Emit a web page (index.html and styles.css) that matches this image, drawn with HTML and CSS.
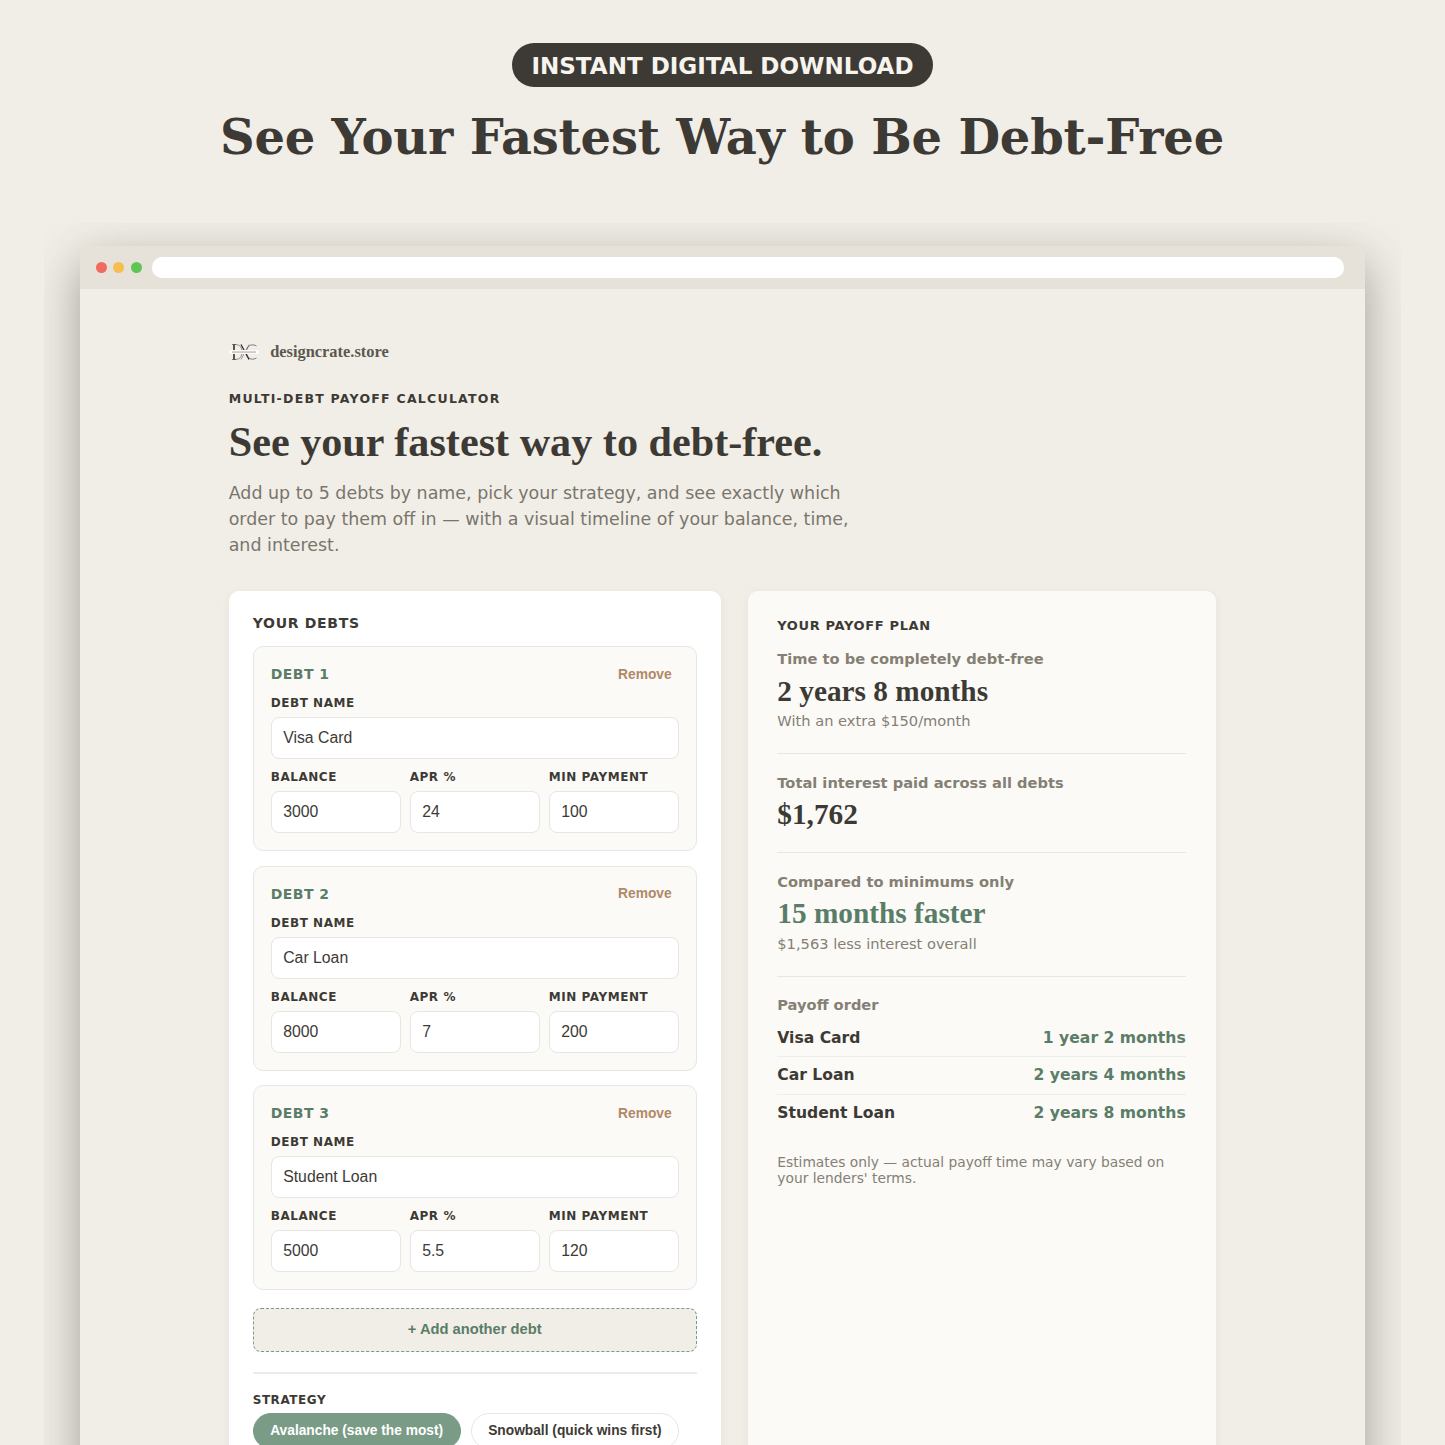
FILE: index.html
```html
<!DOCTYPE html>
<html lang="en">
<head>
<meta charset="utf-8">
<title>Multi-Debt Payoff Calculator</title>
<link rel="stylesheet" href="styles.css">
</head>
<body>
<header class="hero">
  <div class="badge">INSTANT DIGITAL DOWNLOAD</div>
  <h1 class="hero-title">See Your Fastest Way to Be Debt-Free</h1>
</header>
<div class="stage">
<div class="window">
  <div class="chrome">
    <span class="dot red"></span><span class="dot yellow"></span><span class="dot green"></span>
    <div class="url"></div>
  </div>
  <main class="page">
    <div class="brand">
      <svg class="logo" width="30" height="18" viewBox="0 0 30 18">
        <path d="M5 1.5v15" fill="none" stroke="#222" stroke-width="1.5"/>
        <path d="M3 1.5h4M3 16.5h4" fill="none" stroke="#333" stroke-width="0.6"/>
        <path d="M6 1.5c5 0 7 3 7 7.500s-2 7.500-7 7.500" fill="none" stroke="#333" stroke-width="0.5"/>
        <path d="M12 1.500l8 15" fill="none" stroke="#222" stroke-width="1.200"/>
        <path d="M20 1.500l-8 15" fill="none" stroke="#444" stroke-width="0.5"/>
        <path d="M27.500 3c-5-3-10 0-10 6s5 9 10 6" fill="none" stroke="#333" stroke-width="0.6"/>
        <rect x="0" y="7" width="30" height="4" fill="#fbfaf7"/>
        <rect x="3" y="8.600" width="24" height="0.9" fill="#9a9a9a"/>
      </svg>
      <span class="brand-name">designcrate.store</span>
    </div>
    <div class="eyebrow">MULTI-DEBT PAYOFF CALCULATOR</div>
    <h2 class="title">See your fastest way to debt-free.</h2>
    <p class="lead">Add up to 5 debts by name, pick your strategy, and see exactly which order to pay them off in — with a visual timeline of your balance, time, and interest.</p>
    <div class="columns">
      <section class="card inputs">
        <h3 class="card-title">YOUR DEBTS</h3>
        <div class="debt">
          <div class="debt-head"><span class="debt-num">DEBT 1</span><span class="remove">Remove</span></div>
          <label class="lbl">DEBT NAME</label>
          <div class="field">Visa Card</div>
          <div class="triple">
            <div><label class="lbl">BALANCE</label><div class="field">3000</div></div>
            <div><label class="lbl">APR %</label><div class="field">24</div></div>
            <div><label class="lbl">MIN PAYMENT</label><div class="field">100</div></div>
          </div>
        </div>
        <div class="debt">
          <div class="debt-head"><span class="debt-num">DEBT 2</span><span class="remove">Remove</span></div>
          <label class="lbl">DEBT NAME</label>
          <div class="field">Car Loan</div>
          <div class="triple">
            <div><label class="lbl">BALANCE</label><div class="field">8000</div></div>
            <div><label class="lbl">APR %</label><div class="field">7</div></div>
            <div><label class="lbl">MIN PAYMENT</label><div class="field">200</div></div>
          </div>
        </div>
        <div class="debt">
          <div class="debt-head"><span class="debt-num">DEBT 3</span><span class="remove">Remove</span></div>
          <label class="lbl">DEBT NAME</label>
          <div class="field">Student Loan</div>
          <div class="triple">
            <div><label class="lbl">BALANCE</label><div class="field">5000</div></div>
            <div><label class="lbl">APR %</label><div class="field">5.5</div></div>
            <div><label class="lbl">MIN PAYMENT</label><div class="field">120</div></div>
          </div>
        </div>
        <div class="add">+ Add another debt</div>
        <hr class="sep">
        <label class="lbl lbl-strategy">STRATEGY</label>
        <div class="pills">
          <span class="pill on">Avalanche (save the most)</span>
          <span class="pill">Snowball (quick wins first)</span>
        </div>
      </section>
      <section class="card plan">
        <h3 class="plan-title">YOUR PAYOFF PLAN</h3>
        <div class="block">
          <div class="k">Time to be completely debt-free</div>
          <div class="v">2 years 8 months</div>
          <div class="sub">With an extra $150/month</div>
        </div>
        <div class="block">
          <div class="k">Total interest paid across all debts</div>
          <div class="v">$1,762</div>
        </div>
        <div class="block">
          <div class="k">Compared to minimums only</div>
          <div class="v good">15 months faster</div>
          <div class="sub">$1,563 less interest overall</div>
        </div>
        <div class="order">
          <div class="k">Payoff order</div>
          <div class="row"><span>Visa Card</span><span class="when">1 year 2 months</span></div>
          <div class="row"><span>Car Loan</span><span class="when">2 years 4 months</span></div>
          <div class="row"><span>Student Loan</span><span class="when">2 years 8 months</span></div>
        </div>
        <p class="note">Estimates only — actual payoff time may vary based on your lenders' terms.</p>
      </section>
    </div>
  </main>
</div>
</div>
</body>
</html>
```
FILE: styles.css
```css
* { box-sizing: border-box; }
html, body { height: 1445px; overflow: hidden; }
body {
  margin: 0;
  background: #f1eee7;
  color: #3d3a35;
  font-family: "DejaVu Sans", sans-serif;
}
.hero { padding-top: 43px; text-align: center; height: 223px; }
.badge {
  display: inline-block;
  height: 44px;
  padding: 0 19px;
  line-height: 46px;
  border-radius: 22px;
  background: #3d3a35;
  color: #f7f4ee;
  font-size: 23.050px;
  font-weight: 700;
}
.hero-title {
  margin: 20px 1px 0 0;
  font-family: "DejaVu Serif", serif;
  font-size: 48px;
  line-height: 60px;
  font-weight: 700;
  letter-spacing: -0.2px;
  color: #3d3a35;
}
.stage {
  margin: 0 44px;
  height: 1222px;
  padding: 23px 35.700px 0;
  overflow: hidden;
}
.window {
  height: 1300px;
  background: #f1eee7;
  border-radius: 12px 12px 0 0;
  box-shadow: 0 16px 48px rgba(61, 58, 53, 0.45);
}
.chrome {
  display: flex;
  align-items: center;
  gap: 6.500px;
  height: 43px;
  padding: 0 21px 0 16.300px;
  background: #e6e2da;
  border-radius: 12px 12px 0 0;
}
.dot { width: 11px; height: 11px; border-radius: 50%; }
.red { background: #f16a5f; }
.yellow { background: #f7bd4f; }
.green { background: #61c554; }
.url { flex: 1; height: 21px; margin-left: 4px; background: #fff; border-radius: 10px; }
.page { padding: 52px 149px 0; }
.brand { display: flex; align-items: center; gap: 11.500px; height: 22px; }
.logo { display: block; }
.brand-name {
  font-family: "Liberation Serif", serif;
  font-size: 16.400px;
  font-weight: 700;
  color: #5c5850;
}
.eyebrow {
  margin-top: 28px;
  font-size: 12.500px;
  line-height: 16px;
  font-weight: 700;
  letter-spacing: 1.250px;
}
.title {
  margin: 10px 0 0;
  font-family: "Liberation Serif", serif;
  font-size: 42.200px;
  line-height: 50px;
  font-weight: 700;
}
.lead {
  margin: 13px 0 0;
  width: 640px;
  font-size: 17.440px;
  line-height: 26px;
  color: #7a756b;
}
.columns { display: flex; gap: 27px; margin-top: 33px; align-items: stretch; }
.card { border-radius: 10px; box-shadow: 0 2px 10px rgba(61, 58, 53, 0.06); }
.inputs { width: 492px; height: 900px; padding: 24px; background: #fff; }
.plan { width: 468px; height: 900px; padding: 26px 30px 26px 29.600px; background: #fbfaf7; }
.card-title {
  margin: 0 0 14px;
  font-size: 14px;
  line-height: 17px;
  font-weight: 700;
  letter-spacing: 0.700px;
}
.debt {
  height: 205px;
  margin-bottom: 14.500px;
  padding: 17px;
  background: #fbfaf7;
  border: 1px solid #e4e7e3;
  border-radius: 10px;
}
.debt-head {
  display: flex;
  justify-content: space-between;
  align-items: center;
  height: 20px;
  padding-right: 7px;
  margin-bottom: 12px;
}
.debt-num { font-size: 14px; font-weight: 700; letter-spacing: 0.450px; color: #5a7d68; }
.remove { font-family: "Liberation Sans", sans-serif; font-size: 13.800px; font-weight: 700; color: #b08968; }
.lbl {
  display: block;
  font-size: 12px;
  line-height: 14px;
  font-weight: 700;
  letter-spacing: 0.550px;
  margin-bottom: 7px;
}
.lbl-strategy { margin-bottom: 6px; }
.field {
  height: 42px;
  padding: 0 11.500px;
  line-height: 40px;
  background: #fff;
  border: 1px solid #e4e7e3;
  border-radius: 8px;
  font-family: "Liberation Sans", sans-serif;
  font-size: 15.800px;
  color: #3d3a35;
}
.triple { display: grid; grid-template-columns: repeat(3, 1fr); gap: 9px; margin-top: 11.400px; }
.add {
  height: 44px;
  margin-top: 18px;
  line-height: 40px;
  text-align: center;
  background: #f1eee7;
  border: 1px dashed #7a9b85;
  border-radius: 8px;
  font-family: "Liberation Sans", sans-serif;
  font-size: 14.700px;
  font-weight: 700;
  color: #5a7d68;
}
.sep { margin: 20px 0 19px; border: 0; height: 2px; background: #e9ece8; }
.pills { display: flex; gap: 10px; }
.pill {
  height: 36px;
  padding: 0 16.500px;
  line-height: 34px;
  background: #fff;
  border: 1px solid #e4e7e3;
  border-radius: 18px;
  font-family: "Liberation Sans", sans-serif;
  font-size: 13.750px;
  font-weight: 700;
  color: #3d3a35;
}
.pill.on { background: #7a9b85; border-color: #7a9b85; color: #fff; }
.plan-title {
  margin: 1px 0 16px;
  font-size: 13px;
  line-height: 16px;
  font-weight: 700;
  letter-spacing: 0.640px;
}
.block { padding-bottom: 20px; margin-bottom: 19.500px; border-bottom: 1px solid #e4e7e3; }
.k { font-size: 14.650px; line-height: 18px; font-weight: 700; color: #857f74; }
.v {
  margin-top: 5.500px;
  font-family: "Liberation Serif", serif;
  font-size: 29.300px;
  line-height: 35px;
  font-weight: 700;
}
.v.good { color: #5a7d68; }
.sub { margin: 1.500px 0 2px; font-size: 14.650px; line-height: 21px; color: #857f74; }
.order .k { margin-bottom: 5.500px; }
.row {
  display: flex;
  justify-content: space-between;
  height: 37.700px;
  padding-top: 8px;
  font-size: 15.600px;
  line-height: 20px;
  font-weight: 700;
  border-bottom: 1px solid #eceeea;
}
.row:last-child { border-bottom: 0; }
.when { color: #5a7d68; }
.note { margin: 21px 0 0; font-size: 13.800px; line-height: 16px; color: #857f74; }
```
